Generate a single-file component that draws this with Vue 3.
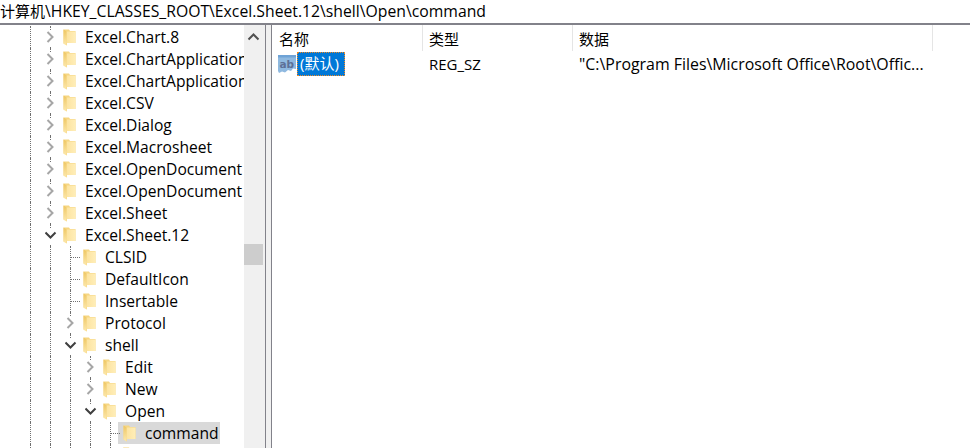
<template>
  <div class="window">
    <div class="address"><span class="cjk">计算机</span>\HKEY_CLASSES_ROOT\Excel.Sheet.12\shell\Open\command</div>
    <div class="panes">
      <div class="tree-pane">
        <div class="tree">
          <div v-for="row in rows" :key="row.id" class="row">
            <span
              v-for="(cell, i) in row.cells"
              :key="i"
              class="cell"
              :class="cell"
            >
              <svg v-if="cell.includes('closed')" class="chev" width="12" height="12" viewBox="0 0 12 12">
                <path d="M2.5 1 7.5 6 2.5 11" fill="none" stroke="#a6a6a6" stroke-width="2" />
              </svg>
              <svg v-if="cell.includes('open')" class="chev" width="12" height="12" viewBox="0 0 12 12">
                <path d="M0.5 3.5 5.5 8.5 10.5 3.5" fill="none" stroke="#404040" stroke-width="2" />
              </svg>
            </span>
            <div class="item" :class="{ selected: row.selected }">
              <svg class="folder" width="13" height="17" viewBox="0 0 13 17">
                <defs>
                  <linearGradient id="fbody" x1="0" y1="0" x2="1" y2="0">
                    <stop offset="0" stop-color="#fce3a0" />
                    <stop offset="1" stop-color="#ffeeb8" />
                  </linearGradient>
                  <linearGradient id="fflap" x1="0" y1="0" x2="0" y2="1">
                    <stop offset="0" stop-color="#eec662" />
                    <stop offset="1" stop-color="#fde9ae" />
                  </linearGradient>
                </defs>
                <path d="M0.5 0.5H6L7 2H12.5V14H4V16.5L0.5 14.5Z" fill="#f6d682" />
                <path d="M3.5 2.5H12.5V14H3.5Z" fill="url(#fbody)" />
                <path d="M0.5 0.5L3.5 2.5V16.5L0.5 14.5Z" fill="url(#fflap)" />
              </svg>
              <span class="label">{{ row.name }}</span>
            </div>
          </div>
        </div>
        <div class="scrollbar">
          <svg class="arrow" width="13" height="8" viewBox="0 0 13 8">
            <path d="M1.5 6.5 6.5 1.5 11.5 6.5" fill="none" stroke="#505050" stroke-width="2" />
          </svg>
          <div class="thumb"></div>
        </div>
      </div>
      <div class="splitter"></div>
      <div class="list-pane">
        <div class="head">
          <div class="col col-name">名称</div>
          <div class="col col-type">类型</div>
          <div class="col col-data">数据</div>
          <div class="head-end"></div>
        </div>
        <div class="value-row">
          <div class="col-name value-name">
            <svg class="ab" width="20" height="21" viewBox="0 0 20 21">
              <path d="M1 1H19V15L16 14.5 14 17 11 16 8 18.5 5 17.5 2 19 1 17Z" fill="#8fb9e0" />
              <path d="M1 1H19V3.5H1Z" fill="#6fa3d6" />
              <text x="2.5" y="13.5" class="ab-text">ab</text>
            </svg>
            <span class="sel-name">(默认)</span>
          </div>
          <div class="col-type value-cell">REG_SZ</div>
          <div class="col-data value-cell data-text">"C:\Program Files\Microsoft Office\Root\Offic...</div>
        </div>
      </div>
    </div>
  </div>
</template>

<script setup>
const L = 'line'
const C = 'line closed'
const O = 'line open'
const T = 'line tee'

const top = (name, id) => ({ id, name, cells: [L, C] })

const rows = [
  top('Excel.Chart.8', 1),
  top('Excel.ChartApplication', 2),
  top('Excel.ChartApplication', 3),
  top('Excel.CSV', 4),
  top('Excel.Dialog', 5),
  top('Excel.Macrosheet', 6),
  top('Excel.OpenDocument', 7),
  top('Excel.OpenDocument', 8),
  top('Excel.Sheet', 9),
  { id: 10, name: 'Excel.Sheet.12', cells: [L, O] },
  { id: 11, name: 'CLSID', cells: [L, L, T] },
  { id: 12, name: 'DefaultIcon', cells: [L, L, T] },
  { id: 13, name: 'Insertable', cells: [L, L, T] },
  { id: 14, name: 'Protocol', cells: [L, L, C] },
  { id: 15, name: 'shell', cells: [L, L, O] },
  { id: 16, name: 'Edit', cells: [L, L, L, C] },
  { id: 17, name: 'New', cells: [L, L, L, C] },
  { id: 18, name: 'Open', cells: [L, L, L, O] },
  { id: 19, name: 'command', cells: [L, L, L, L, T], selected: true },
  { id: 20, name: '', cells: [L, L, L, L, T] },
]
</script>

<style>
html,
body {
  margin: 0;
  background: #fff;
  overflow: hidden;
}
</style>

<style scoped>
.window {
  width: 970px;
  height: 448px;
  display: flex;
  flex-direction: column;
  overflow: hidden;
  font-family: "Open Sans", "Noto Sans CJK SC", sans-serif;
  font-size: 15px;
  color: #000;
}

.address {
  height: 23px;
  line-height: 23px;
  font-size: 15.75px;
  white-space: nowrap;
  border-bottom: 2px solid #82828a;
  flex: none;
}

.cjk {
  font-size: 15px;
}

.panes {
  flex: 1;
  display: flex;
  min-height: 0;
}

.tree-pane {
  width: 265px;
  flex: none;
  display: flex;
  overflow: hidden;
}

.tree {
  width: 244px;
  flex: none;
  padding-top: 1px;
  overflow: hidden;
}

.row {
  height: 22px;
  display: flex;
  padding-left: 20px;
  white-space: nowrap;
}

.cell {
  position: relative;
  width: 20px;
  flex: none;
}

.line::before {
  content: "";
  position: absolute;
  left: 10px;
  top: 0;
  bottom: 0;
  border-left: 1px dotted #707070;
}

.tee::after {
  content: "";
  position: absolute;
  left: 11px;
  width: 9px;
  top: 11px;
  border-top: 1px dotted #707070;
}

.chev {
  position: absolute;
  left: 5px;
  top: 5px;
  padding: 0 0 3px;
  background: #fff;
  z-index: 1;
}

.item {
  display: flex;
  align-items: center;
  height: 22px;
  padding-right: 5px;
  flex: none;
}

.item.selected {
  background: #d9d9d9;
  margin-left: -2px;
  padding-left: 2px;
  padding-right: 1px;
}

.folder {
  margin-left: 3px;
  margin-right: 9px;
  flex: none;
}

.label {
  line-height: 22px;
  font-size: 15.6px;
}

.scrollbar {
  position: relative;
  width: 21px;
  flex: none;
  background: #f0f0f0;
}

.arrow {
  position: absolute;
  left: 3px;
  top: 8px;
}

.thumb {
  position: absolute;
  left: 0;
  right: 2px;
  top: 219px;
  height: 21px;
  background: #cdcdcd;
}

.splitter {
  width: 5px;
  flex: none;
  background: #f0f0f0;
  border-left: 1px solid #82828a;
  border-right: 1px solid #82828a;
}

.list-pane {
  flex: 1;
  min-width: 0;
}

.head {
  display: flex;
  height: 26px;
  line-height: 29px;
}

.col-name {
  width: 151px;
  flex: none;
}

.col-type {
  width: 150px;
  flex: none;
}

.col-data {
  width: 360px;
  flex: none;
}

.col {
  box-sizing: border-box;
  padding-left: 6px;
  border-right: 1px solid #e5e5e5;
}

.col-name.col {
  padding-left: 7px;
}

.head-end {
  flex: 1;
}

.value-row {
  display: flex;
  height: 26px;
  align-items: center;
  line-height: 26px;
}

.value-name {
  display: flex;
  align-items: center;
  padding-left: 5px;
  box-sizing: border-box;
}

.value-cell {
  padding-left: 6px;
  box-sizing: border-box;
  white-space: nowrap;
}

.data-text {
  font-size: 15.9px;
}

.ab {
  flex: none;
}

.ab-text {
  font-family: "DejaVu Sans", sans-serif;
  font-size: 10.5px;
  font-weight: 700;
  fill: #5d7097;
}

.sel-name {
  height: 24px;
  line-height: 22px;
  background: #0078d7;
  color: #fff;
  padding: 0 6px 0 3px;
  box-sizing: border-box;
  outline: 1px dotted #f08a24;
  outline-offset: -1px;
}
</style>
